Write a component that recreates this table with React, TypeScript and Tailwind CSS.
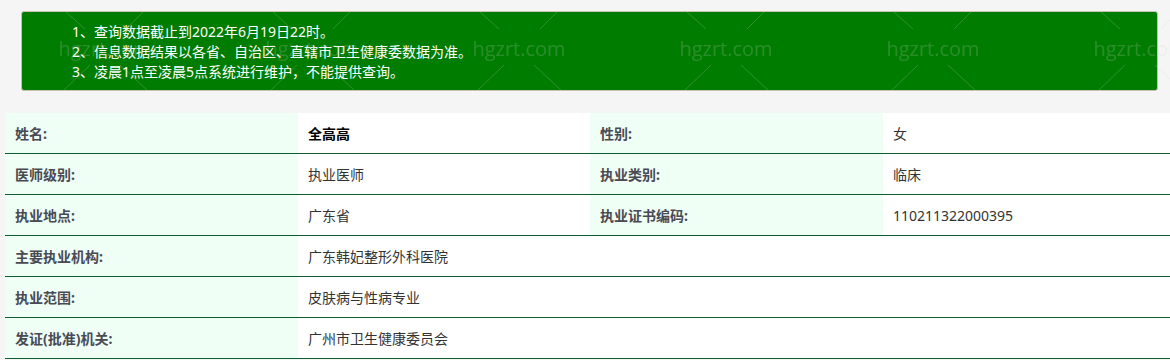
import React from 'react';

const notices = [
  '1、查询数据截止到2022年6月19日22时。',
  '2、信息数据结果以各省、自治区、直辖市卫生健康委数据为准。',
  '3、凌晨1点至凌晨5点系统进行维护，不能提供查询。',
];

interface Cell {
  label: string;
  value: string;
  strong?: boolean;
}

const pairRows: [Cell, Cell][] = [
  [
    { label: '姓名:', value: '全高高', strong: true },
    { label: '性别:', value: '女' },
  ],
  [
    { label: '医师级别:', value: '执业医师' },
    { label: '执业类别:', value: '临床' },
  ],
  [
    { label: '执业地点:', value: '广东省' },
    { label: '执业证书编码:', value: '110211322000395' },
  ],
];

const wideRows: Cell[] = [
  { label: '主要执业机构:', value: '广东韩妃整形外科医院' },
  { label: '执业范围:', value: '皮肤病与性病专业' },
  { label: '发证(批准)机关:', value: '广州市卫生健康委员会' },
];

const Label = ({ text, w }: { text: string; w: string }) => (
  <div className={`${w} h-full shrink-0 flex items-center pl-[10px] bg-[#effff5] font-bold text-[#4a4a55]`}>
    {text}
  </div>
);

const Value = ({ cell, w }: { cell: Cell; w: string }) => (
  <div
    className={`${w} h-full shrink-0 flex items-center pl-[10px] bg-white ${
      cell.strong ? 'font-bold text-black' : 'text-[#333]'
    }`}
  >
    {cell.value}
  </div>
);

// faint repeated "hgzrt.com" watermark laid over the page
const Watermark = () => (
  <svg className="absolute inset-0 pointer-events-none" width="1170" height="360">
    <defs>
      <pattern id="wm" x="2" y="0" width="207" height="420" patternUnits="userSpaceOnUse">
        <g stroke="rgba(210,210,210,0.22)" strokeWidth="1" fill="none">
          <line x1="64" y1="12" x2="83" y2="29" />
          <line x1="124" y1="29" x2="141" y2="12" />
          <line x1="88" y1="65" x2="61" y2="91" />
          <line x1="118" y1="65" x2="146" y2="91" />
        </g>
        <text
          x="103"
          y="56"
          textAnchor="middle"
          fontSize="20"
          fontFamily="'Open Sans', 'Noto Sans', sans-serif"
          fill="rgba(210,210,210,0.2)"
        >
          hgzrt.com
        </text>
      </pattern>
    </defs>
    <rect width="1170" height="112" fill="url(#wm)" />
  </svg>
);

export default function App() {
  return (
    <div
      className="relative w-[1170px] h-[360px] overflow-hidden bg-[#f5f5f5] text-[14px]"
      style={{ fontFamily: "'Noto Sans', 'Noto Sans CJK SC', sans-serif" }}
    >
      <div className="pt-[11px] pl-[21px] pr-[12px]">
        <div className="h-[80px] rounded-[3px] border border-[#c9c2b0] bg-[#007c00] pt-[10px] pl-[50px] text-white leading-[20px]">
          {notices.map((n) => (
            <div key={n}>{n}</div>
          ))}
        </div>
      </div>

      <div className="mt-[22px] ml-[5px] w-[1165px] bg-white">
        {pairRows.map(([a, b]) => (
          <div key={a.label} className="flex h-[41px] border-b border-[#0d5e2e]">
            <Label text={a.label} w="w-[293px]" />
            <Value cell={a} w="w-[292px]" />
            <Label text={b.label} w="w-[293px]" />
            <Value cell={b} w="w-[287px]" />
          </div>
        ))}
        {wideRows.map((r) => (
          <div key={r.label} className="flex h-[41px] border-b border-[#0d5e2e]">
            <Label text={r.label} w="w-[293px]" />
            <Value cell={r} w="w-[872px]" />
          </div>
        ))}
      </div>

      <Watermark />
    </div>
  );
}
